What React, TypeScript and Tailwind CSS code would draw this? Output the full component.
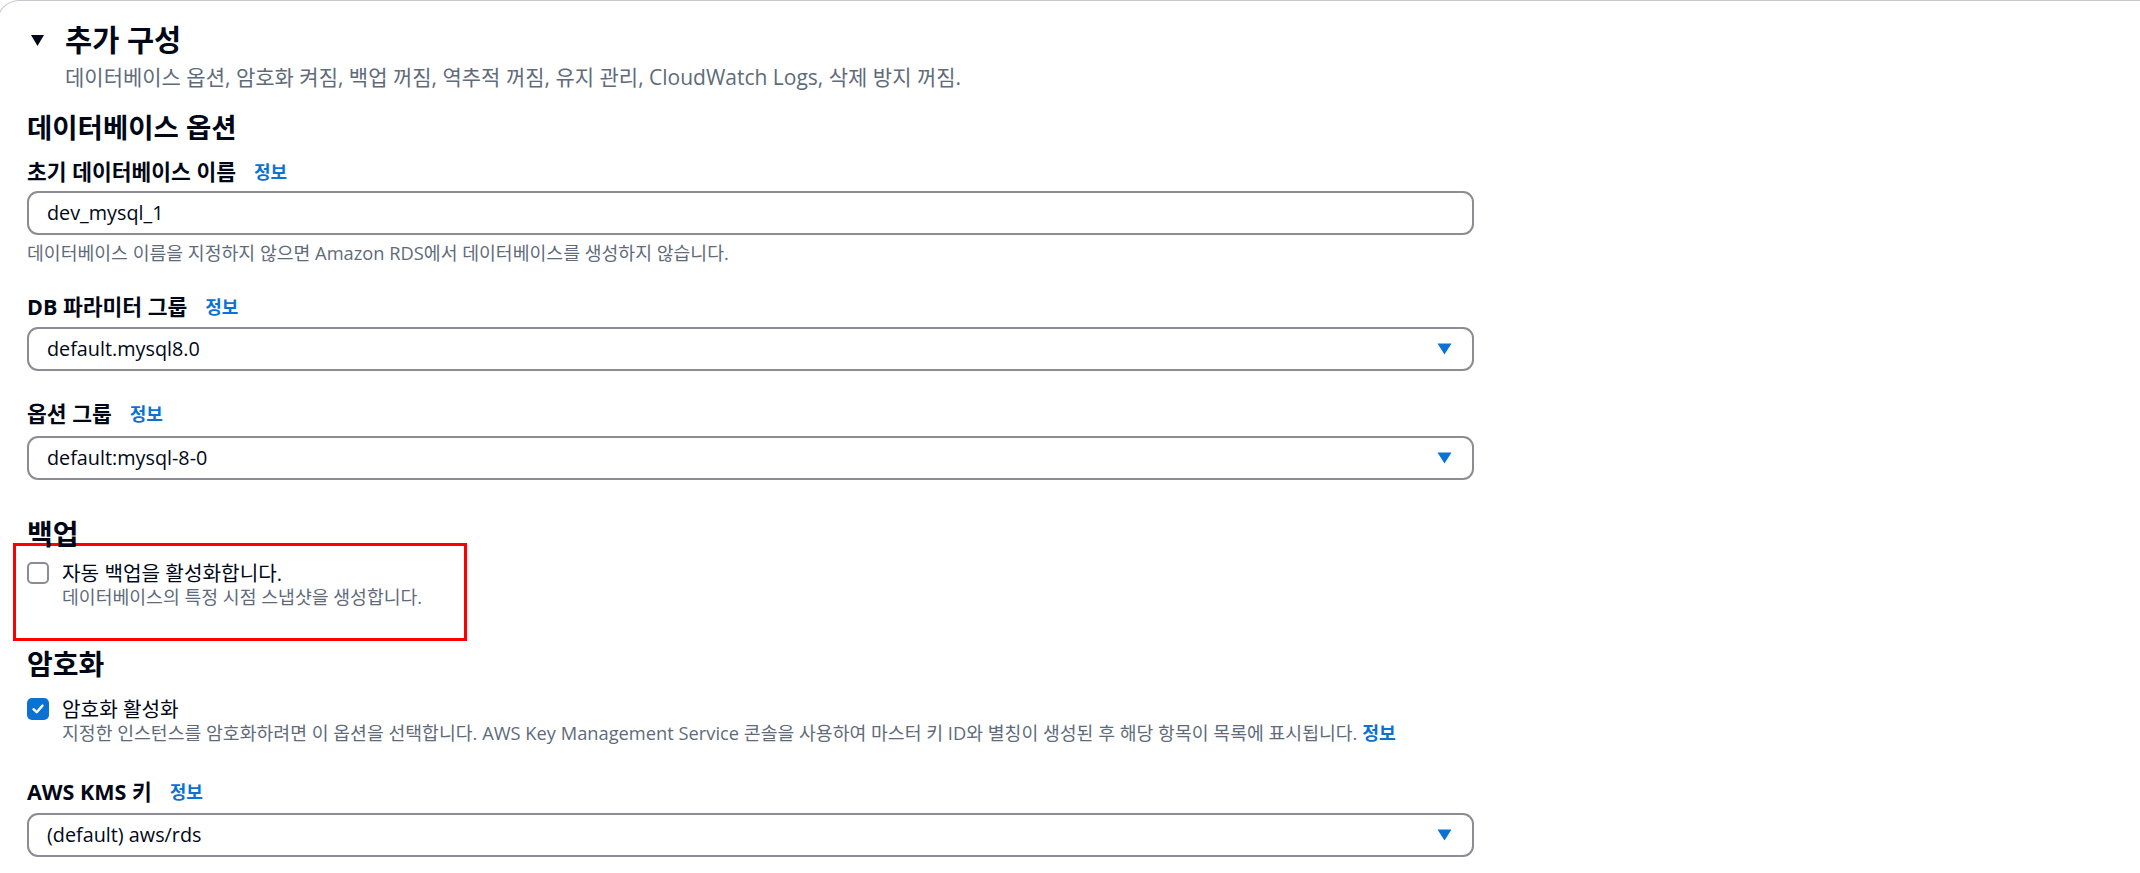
import React from 'react'

const font = { fontFamily: '"Open Sans", "Noto Sans CJK KR", sans-serif' }

function InfoLink({ className = '' }: { className?: string }) {
  return <span className={`font-bold text-[#0972d3] ${className}`}>정보</span>
}

function FieldLabel({ text, className = '' }: { text: string; className?: string }) {
  return (
    <div className={`flex items-center h-[26px] text-[21.5px] leading-[26px] ${className}`}>
      <span className="font-bold text-[#000716]">{text}</span>
      <InfoLink className="ml-[18px] text-[18px]" />
    </div>
  )
}

function Caret() {
  return (
    <svg width="15" height="12" viewBox="0 0 15 12" className="shrink-0">
      <path d="M0.5 0.5 H14.5 L7.5 11.5 Z" fill="#0972d3" />
    </svg>
  )
}

function SelectBox({ value, className = '' }: { value: string; className?: string }) {
  return (
    <div
      className={`flex items-center justify-between w-[1447px] h-[44px] border-[2.5px] border-[#8c8c94] rounded-[11px] pl-[18px] pr-[20px] text-[19.8px] text-[#000716] ${className}`}
    >
      <span>{value}</span>
      <Caret />
    </div>
  )
}

function Checkbox({ checked }: { checked: boolean }) {
  if (checked) {
    return (
      <div className="w-[22px] h-[22px] rounded-[5px] bg-[#0972d3] flex items-center justify-center shrink-0">
        <svg width="14" height="14" viewBox="0 0 14 14">
          <path d="M2.5 7.2 L5.7 10.2 L11.5 3.6" stroke="white" strokeWidth="2.4" fill="none" strokeLinecap="round" strokeLinejoin="round" />
        </svg>
      </div>
    )
  }
  return <div className="w-[22px] h-[22px] rounded-[5px] border-[2.5px] border-[#8c8c94] bg-white shrink-0" />
}

function CheckItem({
  checked,
  label,
  desc,
}: {
  checked: boolean
  label: string
  desc: React.ReactNode
}) {
  return (
    <div className="flex items-start gap-[13px]">
      <div className="pt-[1px]">
        <Checkbox checked={checked} />
      </div>
      <div className="flex flex-col">
        <span className="text-[20.2px] leading-[24px] text-[#000716]">{label}</span>
        <span className="mt-[1px] text-[18.3px] leading-[22px] text-[#5f6b7a]">{desc}</span>
      </div>
    </div>
  )
}

export default function App() {
  return (
    <div className="w-[2140px] h-[873px] bg-white overflow-hidden" style={font}>
      <div className="-ml-[3px] w-[2160px] h-[900px] border-t-[1.5px] border-l-[1.5px] border-[#c6c6cd] rounded-tl-[22px] pl-[29px] pt-[21px]">
        <div className="flex items-center h-[36px] gap-[21px] pl-[4px]">
          <svg width="13" height="11" viewBox="0 0 13 11">
            <path d="M0 0 H13 L6.5 11 Z" fill="#000716" />
          </svg>
          <span className="text-[29.5px] font-bold text-[#000716] leading-[36px]">추가 구성</span>
        </div>
        <div className="mt-[7px] pl-[38px] text-[21px] leading-[24px] text-[#5f6b7a]">
          데이터베이스 옵션, 암호화 켜짐, 백업 꺼짐, 역추적 꺼짐, 유지 관리, CloudWatch Logs, 삭제 방지 꺼짐.
        </div>

        <div className="mt-[23px] text-[27.5px] leading-[32px] font-bold text-[#000716]">데이터베이스 옵션</div>
        <FieldLabel text="초기 데이터베이스 이름" className="mt-[15px]" />
        <div className="mt-[6px] flex items-center w-[1447px] h-[44px] border-[2.5px] border-[#8c8c94] rounded-[11px] pl-[18px] text-[19.8px] text-[#000716]">
          dev_mysql_1
        </div>
        <div className="mt-[7px] text-[18.3px] leading-[22px] text-[#5f6b7a]">
          데이터베이스 이름을 지정하지 않으면 Amazon RDS에서 데이터베이스를 생성하지 않습니다.
        </div>

        <FieldLabel text="DB 파라미터 그룹" className="mt-[30px]" />
        <SelectBox value="default.mysql8.0" className="mt-[7px]" />

        <FieldLabel text="옵션 그룹" className="mt-[30px]" />
        <SelectBox value="default:mysql-8-0" className="mt-[9px]" />

        <div className="mt-[35px] h-[28px] text-[28px] leading-[39px] font-bold text-[#000716]">백업</div>
        <div className="-ml-[14px] w-[454px] h-[98px] border-[3px] border-[#ff0000] pl-[11px] pt-[15px]">
          <CheckItem
            checked={false}
            label="자동 백업을 활성화합니다."
            desc="데이터베이스의 특정 시점 스냅샷을 생성합니다."
          />
        </div>

        <div className="mt-[7px] text-[28px] leading-[32px] font-bold text-[#000716]">암호화</div>
        <div className="mt-[17px]">
          <CheckItem
            checked={true}
            label="암호화 활성화"
            desc={
              <>
                지정한 인스턴스를 암호화하려면 이 옵션을 선택합니다. AWS Key Management Service 콘솔을 사용하여 마스터 키 ID와 별칭이 생성된 후 해당 항목이 목록에 표시됩니다.{' '}
                <InfoLink />
              </>
            }
          />
        </div>

        <FieldLabel text="AWS KMS 키" className="mt-[35px]" />
        <SelectBox value="(default) aws/rds" className="mt-[8px]" />
      </div>
    </div>
  )
}
